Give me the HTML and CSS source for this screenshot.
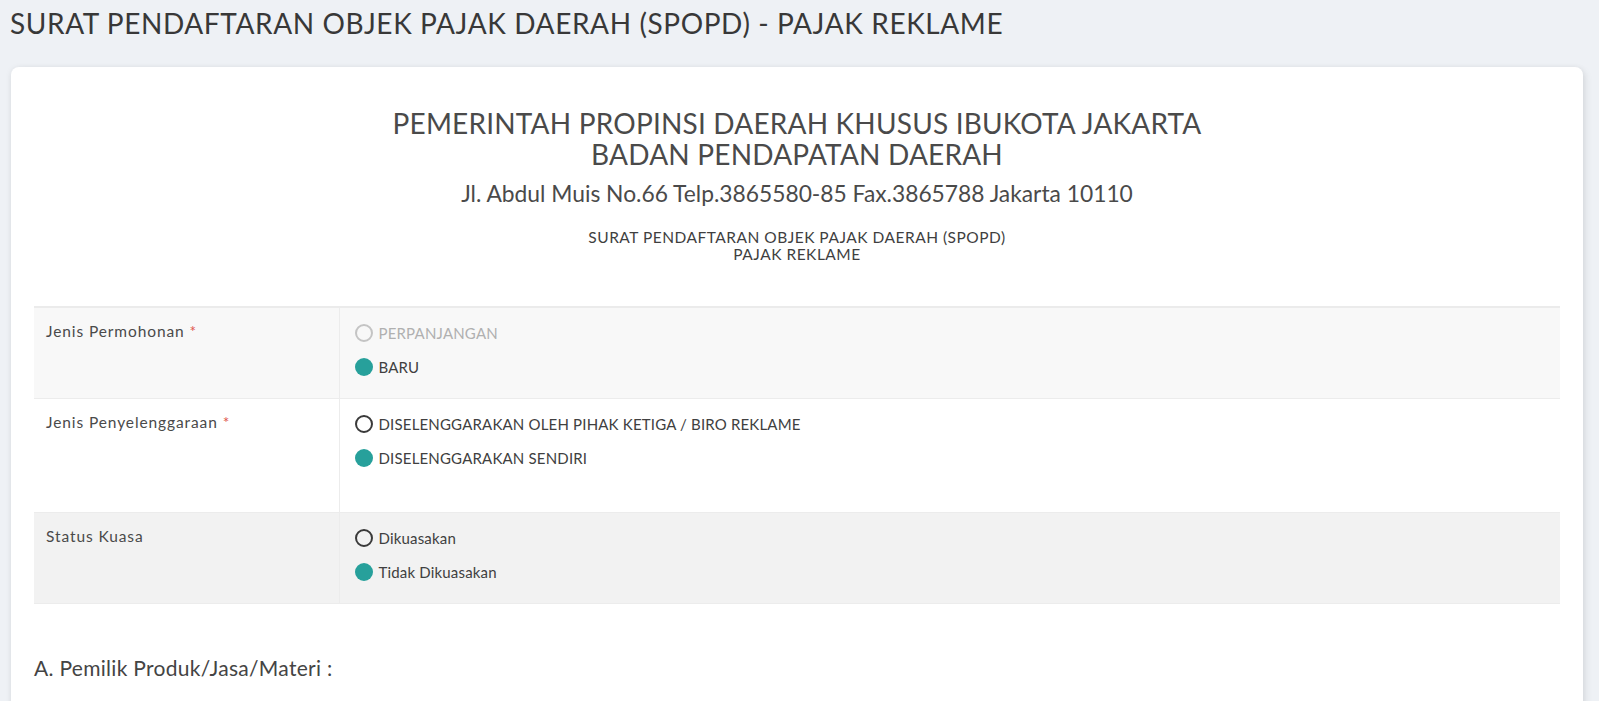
FILE: index.html
```html
<!DOCTYPE html>
<html lang="id">
<head>
<meta charset="utf-8">
<title>SPOPD - Pajak Reklame</title>
<link rel="stylesheet" href="styles.css">
</head>
<body>
<h1 class="page-title">SURAT PENDAFTARAN OBJEK PAJAK DAERAH (SPOPD) - PAJAK REKLAME</h1>
<div class="card">
  <div class="kop">
    <div class="kop-main">PEMERINTAH PROPINSI DAERAH KHUSUS IBUKOTA JAKARTA<br>BADAN PENDAPATAN DAERAH</div>
    <div class="kop-addr">Jl. Abdul Muis No.66 Telp.3865580-85 Fax.3865788 Jakarta 10110</div>
    <div class="kop-sub">SURAT PENDAFTARAN OBJEK PAJAK DAERAH (SPOPD)<br>PAJAK REKLAME</div>
  </div>
  <table class="form-table">
    <colgroup><col class="col-lbl"><col></colgroup>
    <tr class="row-a">
      <td class="lbl">Jenis Permohonan <span class="req">*</span></td>
      <td class="val">
        <label class="radio disabled"><span class="dot"></span>PERPANJANGAN</label>
        <label class="radio checked"><span class="dot"></span>BARU</label>
      </td>
    </tr>
    <tr class="row-b">
      <td class="lbl">Jenis Penyelenggaraan <span class="req">*</span></td>
      <td class="val tall">
        <label class="radio"><span class="dot"></span>DISELENGGARAKAN OLEH PIHAK KETIGA / BIRO REKLAME</label>
        <label class="radio checked"><span class="dot"></span>DISELENGGARAKAN SENDIRI</label>
      </td>
    </tr>
    <tr class="row-c">
      <td class="lbl">Status Kuasa</td>
      <td class="val">
        <label class="radio"><span class="dot"></span>Dikuasakan</label>
        <label class="radio checked"><span class="dot"></span>Tidak Dikuasakan</label>
      </td>
    </tr>
  </table>
  <h2 class="section">A. Pemilik Produk/Jasa/Materi :</h2>
</div>
</body>
</html>
```
FILE: styles.css
```css
html, body {
  margin: 0;
  padding: 0;
}
body {
  background: #eef1f5;
  font-family: "Lato", "Open Sans", sans-serif;
  color: #454545;
  overflow: hidden;
}
.page-title {
  margin: 0;
  padding: 8px 10px 0;
  font-size: 28px;
  font-weight: 400;
  line-height: 30px;
  letter-spacing: 0.6px;
  color: #383838;
}
.card {
  margin: 29px 16px 0 11px;
  background: #fff;
  border-radius: 8px;
  box-shadow: 0 1px 6px rgba(0,0,0,0.08), 3px 3px 8px rgba(0,0,0,0.06);
  padding: 41px 23px 120px;
}
.kop {
  text-align: center;
  color: #4a4a4a;
}
.kop-main {
  font-size: 28px;
  line-height: 31px;
  letter-spacing: 0.2px;
}
.kop-addr {
  font-size: 22.8px;
  line-height: 28px;
  margin-top: 9px;
}
.kop-sub {
  font-size: 15.5px;
  line-height: 17px;
  letter-spacing: 0.5px;
  margin-top: 22px;
  color: #3f3f3f;
}
.form-table {
  width: 100%;
  table-layout: fixed;
  border-collapse: collapse;
  margin-top: 43px;
  border-top: 2px solid #ebebeb;
  font-size: 15px;
}
.col-lbl { width: 305px; }
.form-table td {
  vertical-align: top;
  border-bottom: 1px solid #ececec;
}
.form-table .lbl {
  padding: 13px 12px;
  line-height: 20px;
  border-right: 1px solid #ececec;
  font-size: 15.5px;
  letter-spacing: 0.9px;
  color: #4a4a4a;
}
.form-table .val {
  padding: 14px 15px 20px;
}
.form-table .val.tall {
  padding-bottom: 43px;
}
.row-a { background: #f8f8f8; }
.row-b { background: #fff; }
.row-c { background: #f2f2f2; }
.req { color: #e0574f; letter-spacing: 0; }
.radio {
  display: flex;
  align-items: center;
  gap: 6px;
  height: 22px;
  margin-bottom: 12px;
  letter-spacing: 0.18px;
  color: #404040;
}
.radio:last-child { margin-bottom: 0; }
.dot {
  box-sizing: border-box;
  width: 18px;
  height: 18px;
  border-radius: 50%;
  border: 2px solid #3a3a3a;
  background: transparent;
  flex: none;
}
.radio.disabled { color: #b0b0b0; }
.radio.disabled .dot { border-color: #c4c4c4; }
.radio.checked .dot {
  border: none;
  background: #27a09b;
}
.section {
  margin: 51px 0 0;
  font-size: 21px;
  line-height: 26px;
  letter-spacing: 0.3px;
  font-weight: 400;
  color: #444;
}
```
